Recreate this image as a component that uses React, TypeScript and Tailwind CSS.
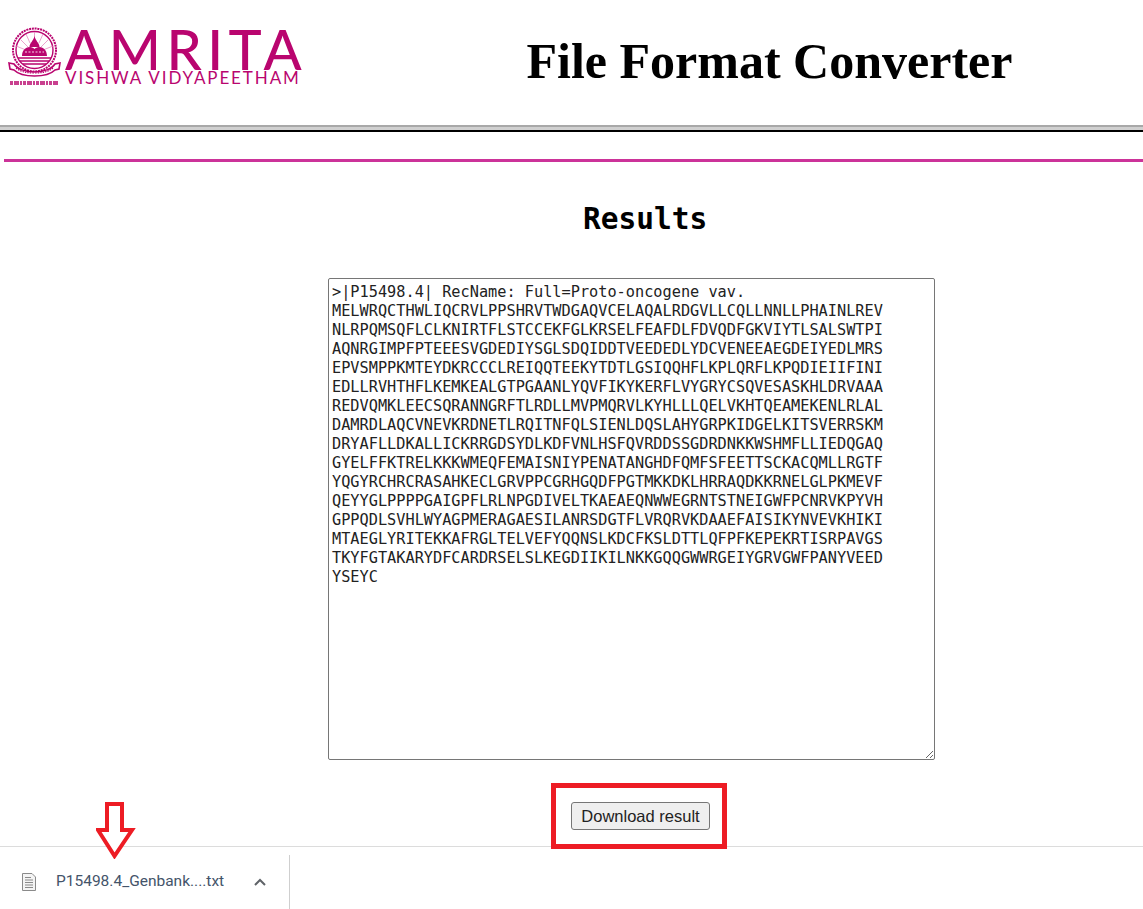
const sequence = `>|P15498.4| RecName: Full=Proto-oncogene vav.
MELWRQCTHWLIQCRVLPPSHRVTWDGAQVCELAQALRDGVLLCQLLNNLLPHAINLREV
NLRPQMSQFLCLKNIRTFLSTCCEKFGLKRSELFEAFDLFDVQDFGKVIYTLSALSWTPI
AQNRGIMPFPTEEESVGDEDIYSGLSDQIDDTVEEDEDLYDCVENEEAEGDEIYEDLMRS
EPVSMPPKMTEYDKRCCCLREIQQTEEKYTDTLGSIQQHFLKPLQRFLKPQDIEIIFINI
EDLLRVHTHFLKEMKEALGTPGAANLYQVFIKYKERFLVYGRYCSQVESASKHLDRVAAA
REDVQMKLEECSQRANNGRFTLRDLLMVPMQRVLKYHLLLQELVKHTQEAMEKENLRLAL
DAMRDLAQCVNEVKRDNETLRQITNFQLSIENLDQSLAHYGRPKIDGELKITSVERRSKM
DRYAFLLDKALLICKRRGDSYDLKDFVNLHSFQVRDDSSGDRDNKKWSHMFLLIEDQGAQ
GYELFFKTRELKKKWMEQFEMAISNIYPENATANGHDFQMFSFEETTSCKACQMLLRGTF
YQGYRCHRCRASAHKECLGRVPPCGRHGQDFPGTMKKDKLHRRAQDKKRNELGLPKMEVF
QEYYGLPPPPGAIGPFLRLNPGDIVELTKAEAEQNWWEGRNTSTNEIGWFPCNRVKPYVH
GPPQDLSVHLWYAGPMERAGAESILANRSDGTFLVRQRVKDAAEFAISIKYNVEVKHIKI
MTAEGLYRITEKKAFRGLTELVEFYQQNSLKDCFKSLDTTLQFPFKEPEKRTISRPAVGS
TKYFGTAKARYDFCARDRSELSLKEGDIIKILNKKGQQGWWRGEIYGRVGWFPANYVEED
YSEYC`

function Emblem() {
  return (
    <svg viewBox="0 0 54 60" className="h-[60px] w-[54px] shrink-0" fill="none">
      <circle cx="27.500" cy="23" r="21.500" stroke="#b9056f" strokeWidth="2" strokeDasharray="2 .8" />
      <circle cx="27.500" cy="23" r="18.500" stroke="#b9056f" strokeWidth="1.400" />
      <path d="M14 13l8 8M41 13l-8 8M27.500 5v6M19 7l4 9M36 7l-4 9M9 19l10 4M46 19l-10 4" stroke="#e58ac0" strokeWidth=".8" />
      <path d="M27.500 9c1 5 5 7 5 11h-10c0-4 4-6 5-11z" fill="#b9056f" />
      <path d="M15 29c0-6 4-9 8-9 2 0 3.500 1 4.500 2 1-1 2.500-2 4.500-2 4 0 8 3 8 9z" fill="#b9056f" />
      <path d="M18 25h19" stroke="#f7d5e8" strokeWidth="1" strokeDasharray="2 1.500" />
      <path d="M11 31h33M13 34h29M16 37h23" stroke="#b9056f" strokeWidth="1.500" />
      <path d="M2 36l5 1c3 5 12 8 20.500 8s17.500-3 20.500-8l5-1-1 6-4 1c-4 4-12 6-20.500 6s-16.500-2-20.500-6l-4-1z" fill="#fff" stroke="#b9056f" strokeWidth="1.600" />
      <path d="M9 41c5 4 11 5 18.500 5s13.500-1 18.500-5" stroke="#b9056f" strokeWidth="1.200" strokeDasharray="1.500 1" />
      <path d="M3 56h48" stroke="#c9408f" strokeWidth="3.800" strokeDasharray="3 1 5 1 2 1" />
    </svg>
  )
}

function Logo() {
  return (
    <div className="flex items-start gap-[4px] pl-[7px] pt-[27px]">
      <Emblem />
      <div className="font-['Lato',sans-serif] text-[#b9056f]">
        <div className="h-[43px] whitespace-nowrap text-[56px] font-medium leading-[43px] tracking-[5.5px]">AMRITA</div>
        <div className="mt-[1px] whitespace-nowrap text-[17px] leading-[14px] tracking-[1.9px]">VISHWA VIDYAPEETHAM</div>
      </div>
    </div>
  )
}

function FileIcon() {
  return (
    <svg viewBox="0 0 14 18" className="h-[18px] w-[14px]" fill="none" stroke="#8a8a8a">
      <path d="M.5.500h9.500l3.500 3.500v13.500H.5z" fill="#f4f4f4" />
      <path d="M3 4.500h6M3 7h8M3 9.500h8M3 12h8M3 14.500h8" />
    </svg>
  )
}

function ArrowMark() {
  return (
    <svg viewBox="0 0 40 58" className="h-[58px] w-[40px]" fill="#fff" stroke="#ed1c24" strokeWidth="4">
      <path d="M11 3h15v26h10L18.500 55 2 29h9z" />
    </svg>
  )
}

export default function App() {
  return (
    <div className="relative flex h-[909px] flex-col overflow-hidden bg-white">
      <header className="flex h-[125px] shrink-0">
        <div className="w-[330px] shrink-0">
          <Logo />
        </div>
        <h1 className="flex-1 pl-[66px] pt-[34px] text-center font-['Liberation_Serif',serif] text-[50px] font-bold leading-[54px] text-black">
          File Format Converter
        </h1>
      </header>
      <div className="h-[7px] shrink-0 border-t-2 border-b-2 border-t-[#a8a8a8] border-b-black bg-[#d0d0d0]" />
      <div className="ml-[4px] mt-[27px] h-[3px] shrink-0 bg-[#cc3399]" />

      <main className="relative z-10 flex min-h-0 flex-1 flex-col items-start">
        <h2 className="ml-[583px] mt-[40px] font-['DejaVu_Sans_Mono',monospace] text-[29.5px] font-bold leading-[34px] text-black">Results</h2>
        <textarea
          readOnly
          value={sequence}
          className="ml-[328px] mt-[42px] block h-[482px] w-[607px] shrink-0 resize rounded-[2px] border border-[#767676] bg-white px-[3px] py-[4px] font-['DejaVu_Sans_Mono',monospace] text-[15.25px] leading-[19px] text-[#222] outline-none"
        />
        <div className="ml-[551px] mt-[23px] flex h-[66px] w-[176px] shrink-0 items-center border-[5px] border-[#ed1c24] pl-[15px]">
          <button className="h-[28px] w-[139px] shrink-0 rounded-[3px] border border-[#767676] bg-[#efefef] font-['Liberation_Sans',sans-serif] text-[16.5px] leading-[24px] text-[#222]">
            Download result
          </button>
        </div>
      </main>

      <footer className="flex h-[63px] shrink-0 items-start border-t border-[#dcdcdc]">
        <div className="mt-[8px] flex h-[54px] w-[290px] shrink-0 items-center border-r border-[#cfcfcf] pl-[22px]">
          <FileIcon />
          <span className="ml-[20px] font-['Roboto',sans-serif] text-[15.5px] text-[#44546a]">P15498.4_Genbank....txt</span>
          <svg viewBox="0 0 12 8" className="ml-[30px] h-[8px] w-[12px]" fill="none" stroke="#5f6368" strokeWidth="2">
            <path d="M1 7l5-5 5 5" />
          </svg>
        </div>
      </footer>

      <div className="absolute left-[96px] top-[801px] z-20">
        <ArrowMark />
      </div>
    </div>
  )
}
